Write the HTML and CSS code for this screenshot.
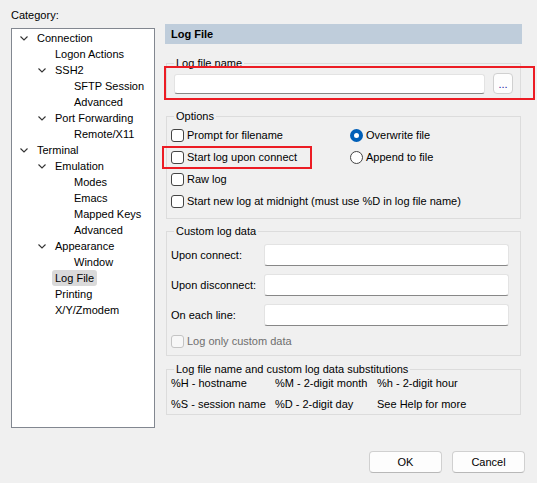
FILE: index.html
```html
<!DOCTYPE html>
<html lang="en">
<head>
  <meta charset="UTF-8" />
  <title>Session Options - Log File</title>
  <link rel="stylesheet" href="styles.css">
</head>
<body>
  <div class="page">
    <div class="main">
      <!-- Category tree -->
      <div class="left">
        <div class="cat-label">Category:</div>
        <div class="tree">
          <div class="node lvl0"><span class="twisty"><svg width="8" height="5" viewBox="0 0 8 5"><path d="M0.5 0.5 L4 4 L7.5 0.5" fill="none" stroke="#333" stroke-width="1.1"/></svg></span><span class="txt">Connection</span></div>
          <div class="node lvl1"><span class="twisty"></span><span class="txt">Logon Actions</span></div>
          <div class="node lvl1"><span class="twisty"><svg width="8" height="5" viewBox="0 0 8 5"><path d="M0.5 0.5 L4 4 L7.5 0.5" fill="none" stroke="#333" stroke-width="1.1"/></svg></span><span class="txt">SSH2</span></div>
          <div class="node lvl2"><span class="twisty"></span><span class="txt">SFTP Session</span></div>
          <div class="node lvl2"><span class="twisty"></span><span class="txt">Advanced</span></div>
          <div class="node lvl1"><span class="twisty"><svg width="8" height="5" viewBox="0 0 8 5"><path d="M0.5 0.5 L4 4 L7.5 0.5" fill="none" stroke="#333" stroke-width="1.1"/></svg></span><span class="txt">Port Forwarding</span></div>
          <div class="node lvl2"><span class="twisty"></span><span class="txt">Remote/X11</span></div>
          <div class="node lvl0"><span class="twisty"><svg width="8" height="5" viewBox="0 0 8 5"><path d="M0.5 0.5 L4 4 L7.5 0.5" fill="none" stroke="#333" stroke-width="1.1"/></svg></span><span class="txt">Terminal</span></div>
          <div class="node lvl1"><span class="twisty"><svg width="8" height="5" viewBox="0 0 8 5"><path d="M0.5 0.5 L4 4 L7.5 0.5" fill="none" stroke="#333" stroke-width="1.1"/></svg></span><span class="txt">Emulation</span></div>
          <div class="node lvl2"><span class="twisty"></span><span class="txt">Modes</span></div>
          <div class="node lvl2"><span class="twisty"></span><span class="txt">Emacs</span></div>
          <div class="node lvl2"><span class="twisty"></span><span class="txt">Mapped Keys</span></div>
          <div class="node lvl2"><span class="twisty"></span><span class="txt">Advanced</span></div>
          <div class="node lvl1"><span class="twisty"><svg width="8" height="5" viewBox="0 0 8 5"><path d="M0.5 0.5 L4 4 L7.5 0.5" fill="none" stroke="#333" stroke-width="1.1"/></svg></span><span class="txt">Appearance</span></div>
          <div class="node lvl2"><span class="twisty"></span><span class="txt">Window</span></div>
          <div class="node lvl1"><span class="twisty"></span><span class="txt selected">Log File</span></div>
          <div class="node lvl1"><span class="twisty"></span><span class="txt">Printing</span></div>
          <div class="node lvl1"><span class="twisty"></span><span class="txt">X/Y/Zmodem</span></div>
        </div>
      </div>

      <!-- Log File panel -->
      <div class="right">
        <div class="panel-title">Log File</div>

        <fieldset class="group g-name">
          <legend>Log file name</legend>
          <div class="name-row">
            <input type="text" class="field name-field" />
            <button class="browse">...</button>
          </div>
        </fieldset>

        <fieldset class="group g-options">
          <legend>Options</legend>
          <div class="opt-grid">
            <label class="check"><span class="box"></span>Prompt for filename</label>
            <label class="check"><span class="radio on"></span>Overwrite file</label>
            <label class="check"><span class="box"></span>Start log upon connect</label>
            <label class="check"><span class="radio"></span>Append to file</label>
            <label class="check wide"><span class="box"></span>Raw log</label>
            <label class="check wide"><span class="box"></span>Start new log at midnight (must use %D in log file name)</label>
          </div>
        </fieldset>

        <fieldset class="group g-custom">
          <legend>Custom log data</legend>
          <div class="custom-grid">
            <span class="lbl">Upon connect:</span><input type="text" class="field" />
            <span class="lbl">Upon disconnect:</span><input type="text" class="field" />
            <span class="lbl">On each line:</span><input type="text" class="field" />
          </div>
          <label class="check disabled"><span class="box"></span>Log only custom data</label>
        </fieldset>

        <fieldset class="group g-subs">
          <legend>Log file name and custom log data substitutions</legend>
          <div class="subs-grid">
            <span>%H - hostname</span><span>%M - 2-digit month</span><span>%h - 2-digit hour</span>
            <span>%S - session name</span><span>%D - 2-digit day</span><span>See Help for more</span>
          </div>
        </fieldset>
      </div>
    </div>

    <div class="footer">
      <button class="btn">OK</button>
      <button class="btn">Cancel</button>
    </div>

    <!-- annotation boxes -->
    <div class="mark mark-name"></div>
    <div class="mark mark-start"></div>
  </div>
</body>
</html>
```
FILE: styles.css
```css
* {
  box-sizing: border-box;
}
body {
  margin: 0;
  background: #f0f0f0;
  font-family: "Liberation Sans", Arial, sans-serif;
  font-size: 11px;
  color: #000;
}
.page {
  position: relative;
  width: 537px;
  height: 483px;
  padding: 8px 0 0 11px;
}
.main {
  display: flex;
  gap: 10px;
}
.left {
  width: 144px;
}
.cat-label {
  line-height: 14px;
  height: 14px;
}
.tree {
  margin-top: 6px;
  height: 400px;
  background: #fff;
  border: 1px solid #828790;
  padding-top: 1px;
}
.node {
  display: flex;
  align-items: center;
  height: 16px;
  line-height: 16px;
  white-space: nowrap;
}
.lvl1 { padding-left: 18px; }
.lvl2 { padding-left: 37px; }
.twisty {
  width: 25px;
  padding-left: 8px;
  display: flex;
  align-items: center;
}
.twisty svg {
  display: block;
}
.txt.selected {
  background: #dadada;
  border-radius: 3px;
  margin-left: -3px;
  padding: 0 3px;
}

/* right side */
.right {
  width: 357px;
  padding-top: 16px;
}
.panel-title {
  height: 20px;
  line-height: 20px;
  background: #bfcddb;
  font-weight: bold;
  padding-left: 6px;
}
.group {
  margin: 0 1px;
  border: 1px solid #dcdcdc;
  padding: 0 4px;
  min-width: 0;
}
.group legend {
  padding: 0 2px;
  margin-left: 3px;
  line-height: 14px;
  color: #000;
}
.g-name {
  margin-top: 12px;
  padding-top: 3px;
  padding-bottom: 5px;
}
.name-row {
  display: flex;
  align-items: center;
  gap: 8px;
  padding-left: 3px;
}
.field {
  display: block;
  height: 20px;
  background: #fff;
  border: 1px solid #e3e3e3;
  border-bottom: 1px solid #878787;
  border-radius: 3px;
  font: inherit;
  padding: 0 4px;
}
.name-field {
  width: 311px;
}
.browse {
  width: 20px;
  height: 21px;
  padding: 0;
  background: #fdfdfd;
  border: 1px solid #d0d0d0;
  border-radius: 4px;
  font: inherit;
  color: #1a1aa0;
  line-height: 14px;
}
.g-options {
  margin-top: 9px;
  padding-top: 1px;
  padding-bottom: 6px;
}
.opt-grid {
  display: grid;
  grid-template-columns: 179px 1fr;
  grid-auto-rows: 22px;
}
.check {
  display: flex;
  align-items: center;
  gap: 3px;
  white-space: nowrap;
}
.check.wide {
  grid-column: 1 / 3;
}
.box {
  width: 13px;
  height: 13px;
  border: 1px solid #444;
  border-radius: 3px;
  background: #fff;
  flex: none;
}
.radio {
  width: 13px;
  height: 13px;
  border: 1px solid #444;
  border-radius: 50%;
  background: #fff;
  flex: none;
}
.radio.on {
  border: 4px solid #005fb8;
  background: #fff;
}
.g-custom {
  margin-top: 5px;
  padding-top: 6px;
  padding-bottom: 3px;
}
.custom-grid {
  display: grid;
  grid-template-columns: 93px 245px;
  grid-auto-rows: 22px;
  row-gap: 8px;
  align-items: center;
}
.custom-grid .lbl {
  white-space: nowrap;
}
.custom-grid .field {
  height: 22px;
  width: 245px;
}
.check.disabled {
  color: #6e6e6e;
  height: 22px;
  margin-top: 4px;
}
.check.disabled .box {
  border-color: #c4c4c4;
  background: #f7f7f7;
}
.g-subs {
  margin-top: 6px;
  padding-top: 0;
  padding-bottom: 3px;
}
.subs-grid {
  display: grid;
  grid-template-columns: 104px 102px 1fr;
  grid-auto-rows: 14px;
  row-gap: 7px;
  line-height: 14px;
  white-space: nowrap;
}

/* buttons */
.footer {
  display: flex;
  justify-content: flex-end;
  gap: 10px;
  margin-top: 23px;
  padding-right: 12px;
}
.btn {
  width: 73px;
  height: 22px;
  background: #fdfdfd;
  border: 1px solid #d0d0d0;
  border-bottom-color: #b8b8b8;
  border-radius: 4px;
  font: inherit;
  color: #000;
}

/* red annotation rectangles */
.mark {
  position: absolute;
  border: 2px solid #ec1c24;
}
.mark-name {
  left: 164px;
  top: 66px;
  width: 371px;
  height: 34px;
}
.mark-start {
  left: 162px;
  top: 146px;
  width: 150px;
  height: 23px;
}
```
